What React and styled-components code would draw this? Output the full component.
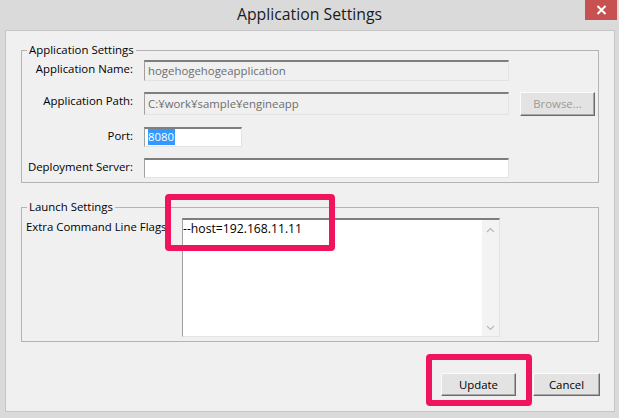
import React from "react";
import styled, { createGlobalStyle } from "styled-components";

const GlobalStyle = createGlobalStyle`
  html, body { margin: 0; padding: 0; background: #dadada; }
  body { font-family: "Open Sans", "Noto Sans", "Liberation Sans", sans-serif; font-size: 11.4px; color: #000; }
  * { box-sizing: border-box; }
`;

const Window = styled.div`
  position: relative;
  width: 619px;
  height: 418px;
  background: #dadada;
  display: flex;
  flex-direction: column;
  overflow: hidden;
`;

const TitleBar = styled.div`
  height: 30px;
  display: grid;
  grid-template-columns: 1fr auto 1fr;
  align-items: start;
`;

const Title = styled.div`
  grid-column: 2;
  font-size: 15.8px;
  line-height: 28px;
  color: #1a1a1a;
`;

const CloseButton = styled.div`
  grid-column: 3;
  justify-self: end;
  width: 32px;
  height: 20px;
  margin-right: 2px;
  background: #c75050;
  display: flex;
  align-items: center;
  justify-content: center;
`;

const Client = styled.div`
  flex: 1;
  margin: 0 4px 6px 5px;
  background: #f0f0f0;
  border: 1px solid #c6c6c6;
  padding: 11px 15px 0 15px;
  display: flex;
  flex-direction: column;
`;

const Group = styled.fieldset`
  margin: ${(p) => p.$mt || 0}px 0 0 0;
  border: 1px solid #b4b4b4;
  padding: ${(p) => p.$pt}px 2px 4px 4px;
  min-width: 0;
`;

const Legend = styled.legend`
  margin-left: 1px;
  padding: 0 2px;
  line-height: 16px;
`;

const FormGrid = styled.div`
  display: grid;
  grid-template-columns: 107px 365px 75px;
  grid-template-rows: 21px 24px 20px 20px;
  column-gap: 11px;
  row-gap: 11px;
  align-items: start;
`;

const Label = styled.div`
  justify-self: ${(p) => (p.$left ? "start" : "end")};
  line-height: 16px;
  margin-top: 1px;
  white-space: nowrap;
`;

const Field = styled.div`
  grid-column: 2;
  width: ${(p) => p.$w || 365}px;
  height: ${(p) => p.$h || 20}px;
  background: ${(p) => (p.$disabled ? "#f0f0f0" : "#fff")};
  color: ${(p) => (p.$disabled ? "#6d6d6d" : "#000")};
  border-style: solid;
  border-width: 2px 1px 1px 1px;
  border-color: #7e7e7e #e3e3e3 #e3e3e3 #a0a0a0;
  padding: 0 0 0 3px;
  line-height: ${(p) => (p.$h || 20) - 4}px;
  white-space: nowrap;
  overflow: hidden;
`;

const Selected = styled.span`
  background: #3399ff;
  color: #fff;
  display: inline-block;
  line-height: 16px;
  padding: 0 1px 0 0;
`;

const Button = styled.div`
  width: ${(p) => p.$w}px;
  height: ${(p) => p.$h || 23}px;
  background: #e3e3e3;
  border: 1px solid;
  border-color: #fbfbfb #6a6a6a #6a6a6a #fbfbfb;
  box-shadow: inset -1px -1px 0 #a8a8a8;
  color: ${(p) => (p.$disabled ? "#9a9a9a" : "#000")};
  display: flex;
  align-items: center;
  justify-content: center;
  padding-bottom: 1px;
`;

const LaunchGrid = styled.div`
  display: grid;
  grid-template-columns: 156px 318px;
  align-items: start;
`;

const TextBox = styled.div`
  height: 119px;
  display: flex;
  background: #fff;
  border-style: solid;
  border-width: 2px 1px 1px 1px;
  border-color: #7e7e7e #e3e3e3 #e3e3e3 #a0a0a0;
`;

const TextArea = styled.div`
  flex: 1;
  padding: 1px 0 0 0;
  font-size: 12.2px;
  line-height: 16px;
  white-space: pre;
`;

const ScrollTrack = styled.div`
  width: 17px;
  background: #f3f3f3;
  display: flex;
  flex-direction: column;
  justify-content: space-between;
  align-items: center;
  padding: 7px 0 5px;
`;

const ButtonRow = styled.div`
  display: flex;
  justify-content: flex-end;
  gap: 17px;
  margin: 31px -1px 0 0;
`;

const Annotation = styled.div`
  position: absolute;
  left: ${(p) => p.$x}px;
  top: ${(p) => p.$y}px;
  width: ${(p) => p.$w}px;
  height: ${(p) => p.$h}px;
  border: 6.5px solid #f0145c;
  border-radius: 4px;
  pointer-events: none;
`;

const Chevron = ({ up }) => (
  <svg width="9" height="6" viewBox="0 0 9 6">
    <path
      d={up ? "M1 5 L4.5 1.5 L8 5" : "M1 1 L4.5 4.5 L8 1"}
      fill="none"
      stroke="#b8b8b8"
      strokeWidth="1.2"
    />
  </svg>
);

export default function App() {
  return (
    <Window>
      <GlobalStyle />
      <TitleBar>
        <Title>Application Settings</Title>
        <CloseButton>
          <svg width="11" height="10" viewBox="0 0 11 10">
            <path d="M1.5 1 L9.5 9 M9.5 1 L1.5 9" stroke="#fff" strokeWidth="2" />
          </svg>
        </CloseButton>
      </TitleBar>
      <Client>
        <Group $pt={2}>
          <Legend>Application Settings</Legend>
          <FormGrid>
            <Label>Application Name:</Label>
            <Field $disabled $h={21}>hogehogehogeapplication</Field>
            <div />
            <Label>Application Path:</Label>
            <Field $disabled $h={23}>C:¥work¥sample¥engineapp</Field>
            <Button $w={75} $h={24} $disabled>Browse...</Button>
            <Label>Port:</Label>
            <Field $w={98}>
              <Selected>8080</Selected>
            </Field>
            <div />
            <Label>Deployment Server:</Label>
            <Field />
            <div />
          </FormGrid>
        </Group>
        <Group $pt={3} $mt={16}>
          <Legend>Launch Settings</Legend>
          <LaunchGrid>
            <Label $left>Extra Command Line Flags</Label>
            <TextBox>
              <TextArea>--host=192.168.11.11</TextArea>
              <ScrollTrack>
                <Chevron up />
                <Chevron />
              </ScrollTrack>
            </TextBox>
          </LaunchGrid>
        </Group>
        <ButtonRow>
          <Button $w={75}>Update</Button>
          <Button $w={67}>Cancel</Button>
        </ButtonRow>
      </Client>
      <Annotation $x={165} $y={194} $w={170} $h={57} />
      <Annotation $x={426} $y={354} $w={106} $h={52} />
    </Window>
  );
}
